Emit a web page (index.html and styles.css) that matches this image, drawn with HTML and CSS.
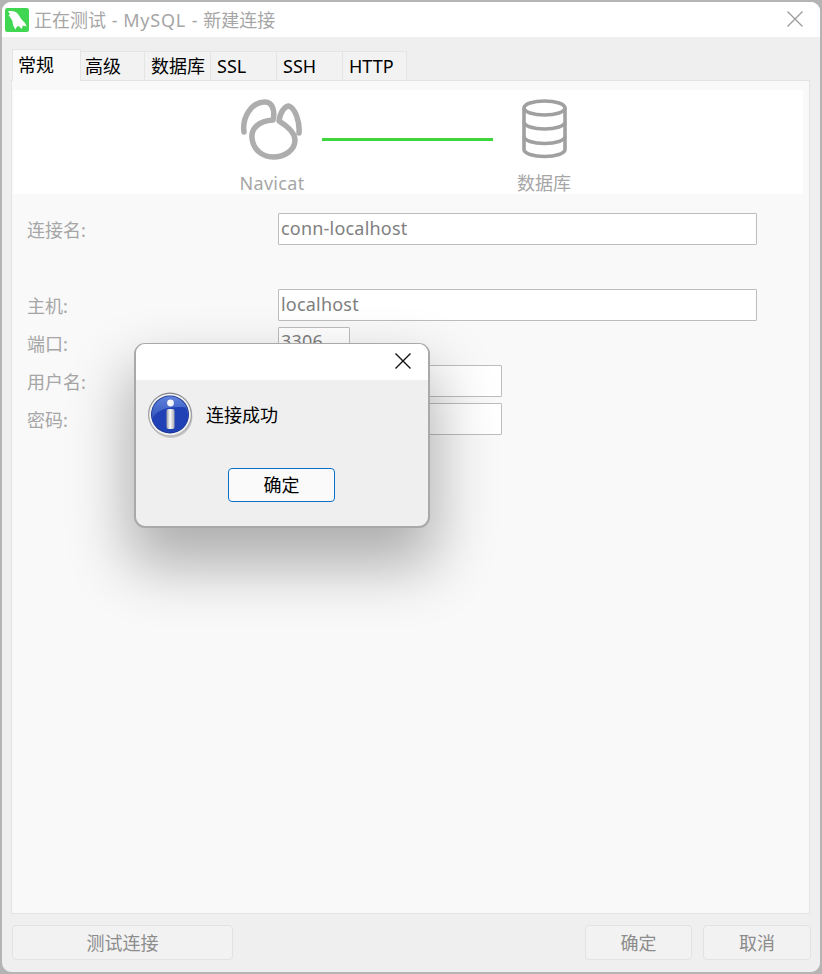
FILE: index.html
```html
<!DOCTYPE html>
<html lang="zh">
<head>
<meta charset="utf-8">
<title>正在测试 - MySQL - 新建连接</title>
<link rel="stylesheet" href="styles.css">
</head>
<body>
<div class="window">
  <header class="titlebar">
    <svg class="app-icon" viewBox="0 0 24 24" width="24" height="24">
      <rect width="24" height="24" rx="2.5" fill="#41d651"/>
      <path fill="#fff" d="M3 3.5 C6 2.5 10 3 12.5 5.5 C15 8 15.5 11 18 13 C19.5 14.2 21 16 21.5 18.5 C20 17.8 18.5 17.6 17.5 18 C17.6 19 17.2 20 16.5 21 C15.5 19.6 14.5 18.5 13 18 C11.5 19 11 20 10.5 21.5 C8.5 19 7.5 16 7.5 13 C6 10.5 5 8.5 3.5 7.5 L5 6 Z"/>
    </svg>
    <span class="title-text">正在测试 - <span class="title-app">MySQL</span> - 新建连接</span>
    <svg class="close-icon" viewBox="0 0 16 16" width="16" height="16">
      <path d="M0.5 0.5 L15.5 15.5 M15.5 0.5 L0.5 15.5" stroke="#9a9a9a" stroke-width="1.3" fill="none"/>
    </svg>
  </header>

  <nav class="tabs">
    <span class="tab tab-active">常规</span>
    <span class="tab">高级</span>
    <span class="tab">数据库</span>
    <span class="tab">SSL</span>
    <span class="tab">SSH</span>
    <span class="tab">HTTP</span>
  </nav>

  <main class="panel">
    <section class="banner">
      <div class="step">
        <svg class="step-icon" viewBox="1 0 80 80" width="80" height="80">
          <path d="M13 42 C11 28 20 12 34 12 C42 12 44 22 42 30 C28 31 20 38 21 48 C22 60 32 67 42 67 C54 67 64 60 64 50 C64 42 56 36 48 31 C49 22 54 16 58 16 C64 18 69 32 68 43" fill="none" stroke="#adadad" stroke-width="5.5" stroke-linecap="round" stroke-linejoin="round"/>
        </svg>
        <span class="step-label step-label-latin">Navicat</span>
      </div>
      <div class="link-line"></div>
      <div class="step step-db">
        <svg class="step-icon" viewBox="0 -9 80 80" width="80" height="80">
          <g fill="none" stroke="#a0a0a0" stroke-width="3.6">
            <ellipse cx="40.5" cy="9" rx="20.5" ry="7"/>
            <path d="M20 9 V50.5 A20.5 7 0 0 0 61 50.5 V9"/>
            <path d="M20 23 A20.5 7 0 0 0 61 23"/>
            <path d="M20 37.5 A20.5 7 0 0 0 61 37.5"/>
          </g>
        </svg>
        <span class="step-label">数据库</span>
      </div>
    </section>

    <form class="form">
      <div class="row row-spaced"><label class="field-label">连接名:</label><div class="input input-wide">conn-localhost</div></div>
      <div class="row"><label class="field-label">主机:</label><div class="input input-wide">localhost</div></div>
      <div class="row"><label class="field-label">端口:</label><div class="input input-port">3306</div></div>
      <div class="row"><label class="field-label">用户名:</label><div class="input input-mid"></div></div>
      <div class="row"><label class="field-label">密码:</label><div class="input input-mid"></div></div>
    </form>
  </main>

  <footer class="footer">
    <button class="btn btn-test" type="button">测试连接</button>
    <div class="footer-right">
      <button class="btn btn-ok" type="button">确定</button>
      <button class="btn btn-cancel" type="button">取消</button>
    </div>
  </footer>
</div>

<div class="dialog">
  <div class="dialog-title">
    <svg class="dialog-close" viewBox="0 0 16 16" width="16" height="16">
      <path d="M0.5 0.5 L15.5 15.5 M15.5 0.5 L0.5 15.5" stroke="#111" stroke-width="1.4" fill="none"/>
    </svg>
  </div>
  <div class="dialog-body">
    <svg class="info-icon" viewBox="0 0 46 46" width="46" height="46">
      <defs>
        <linearGradient id="ring" x1="0" y1="0" x2="0" y2="1">
          <stop offset="0" stop-color="#7f8188"/>
          <stop offset="1" stop-color="#b8b8b8"/>
        </linearGradient>
        <linearGradient id="disc" x1="0" y1="0" x2="0" y2="1">
          <stop offset="0" stop-color="#5f82de"/>
          <stop offset="0.5" stop-color="#3a5cc0"/>
          <stop offset="1" stop-color="#1d3fae"/>
        </linearGradient>
        <linearGradient id="stem" x1="0" y1="0" x2="1" y2="0">
          <stop offset="0" stop-color="#9a9ca4"/>
          <stop offset="0.45" stop-color="#fbfbfb"/>
          <stop offset="1" stop-color="#a6a8b0"/>
        </linearGradient>
      </defs>
      <circle cx="23" cy="24.5" r="21.5" fill="#000" opacity="0.18"/>
      <circle cx="22" cy="22.5" r="22" fill="url(#ring)"/>
      <circle cx="22" cy="22.5" r="20.8" fill="#f2f2f2"/>
      <circle cx="22" cy="22.5" r="19" fill="#16308c"/>
      <circle cx="22" cy="22.5" r="18.2" fill="url(#disc)"/>
      <path d="M4 27 C9 18 20 13.5 38 15.5 C41.5 23 40 32 34 36.5 C26 42.5 9 41.5 4 27 Z" fill="#2041b6"/>
      <circle cx="22.5" cy="11" r="3.4" fill="#f4f6fb"/>
      <rect x="18.5" y="17" width="8" height="20" rx="2" fill="url(#stem)"/>
    </svg>
    <span class="dialog-msg">连接成功</span>
  </div>
  <div class="dialog-actions">
    <button class="dialog-btn" type="button">确定</button>
  </div>
</div>
</body>
</html>
```
FILE: styles.css
```css
* {
  box-sizing: border-box;
}

html,
body {
  margin: 0;
  height: 974px;
  overflow: hidden;
}

body {
  position: relative;
  padding: 0 0 2px;
  font-family: "Noto Sans", "Noto Sans CJK SC", sans-serif;
  font-size: 18px;
  background: linear-gradient(180deg, #b4b4b4 0, #b4b4b4 178px, #c07060 180px, #c07060 190px, #5f8cb0 195px, #5f8cb0 205px, #9fa9b3 210px, #b4b4b4 240px);
}

.window {
  width: 822px;
  height: 974px;
  display: flex;
  flex-direction: column;
  background: #efefef;
  border: 2px solid #b4b4b4;
  border-radius: 11px;
  overflow: hidden;
}

.titlebar {
  height: 35px;
  flex: none;
  display: flex;
  align-items: center;
  padding: 0 17px 0 3px;
  background: #fff;
}

.app-icon {
  flex: none;
  margin-top: 1px;
}

.title-text {
  margin-left: 5px;
  color: #a6a6a6;
  line-height: 24px;
  word-spacing: 1px;
}

.title-app {
  letter-spacing: 0.8px;
}

.close-icon {
  margin-left: auto;
  margin-top: -2px;
}

.tabs {
  height: 32px;
  flex: none;
  margin-top: 12px;
  padding-left: 10px;
  display: flex;
  align-items: flex-end;
  position: relative;
  z-index: 1;
}

.tab {
  width: 66px;
  height: 29px;
  flex: none;
  padding-left: 6px;
  margin-bottom: 1px;
  line-height: 28px;
  color: #000;
  white-space: nowrap;
  background: #f2f2f2;
  border: 1px solid #e4e4e4;
  border-bottom: 0;
  border-left: 0;
}

.tab:nth-child(2) {
  width: 64px;
  padding-left: 4px;
}

.tab:last-child {
  width: 64px;
}

.tab-active {
  width: 69px;
  height: 32px;
  margin-bottom: 0;
  padding-left: 5px;
  line-height: 31px;
  background: #f9f9f9;
  border-left: 1px solid #e4e4e4;
}

.panel {
  flex: 1;
  margin: -1px 10px 0 9px;
  padding-top: 9px;
  background: #f9f9f9;
  border: 1px solid #e4e4e4;
}

.banner {
  height: 104px;
  margin: 0 6px 0 1px;
  display: flex;
  justify-content: center;
  align-items: flex-start;
  background: #fff;
  overflow: hidden;
}

.step {
  width: 80px;
  flex: none;
  display: flex;
  flex-direction: column;
  align-items: center;
  color: #a6a6a6;
}

.step-db {
  margin-left: 11px;
}

.step-icon {
  display: block;
  width: 80px;
  height: 80px;
  flex: none;
}

.step-label {
  line-height: 26px;
  white-space: nowrap;
}

.step-label-latin {
  letter-spacing: 0.3px;
}

.link-line {
  width: 171px;
  height: 3px;
  flex: none;
  margin: 48px 0 0 10px;
  background: #3dd63d;
}

.form {
  padding: 19px 0 0 15px;
}

.row {
  display: flex;
  align-items: center;
  height: 32px;
  margin-bottom: 6px;
}

.row-spaced {
  margin-bottom: 44px;
}

.field-label {
  width: 251px;
  flex: none;
  color: #a6a6a6;
}

.input {
  height: 32px;
  padding-left: 2px;
  color: #808080;
  line-height: 28px;
  letter-spacing: 0.2px;
  background: #fff;
  border: 1px solid #bdbdbd;
  border-radius: 1px;
  white-space: nowrap;
}

.input-wide {
  width: 479px;
}

.input-port {
  width: 72px;
  line-height: 27px;
}

.input-mid {
  width: 224px;
}

.footer {
  height: 58px;
  flex: none;
  display: flex;
  justify-content: space-between;
  padding: 11px 9px 0 10px;
}

.footer-right {
  display: flex;
  gap: 11px;
}

.btn {
  height: 35px;
  padding: 0;
  font: inherit;
  line-height: 30px;
  color: #8c8c8c;
  background: #f2f2f2;
  border: 1px solid #e2e2e2;
  border-radius: 4px;
}

.btn-test {
  width: 221px;
}

.btn-ok {
  width: 107px;
}

.btn-cancel {
  width: 108px;
}

.dialog {
  position: absolute;
  left: 134px;
  top: 343px;
  width: 296px;
  height: 185px;
  background: #efefef;
  border: 2px solid #a9a9a9;
  border-top-width: 1px;
  border-radius: 11px;
  box-shadow: 0 32px 60px 6px rgba(0, 0, 0, 0.3);
}

.dialog-title {
  height: 36px;
  display: flex;
  justify-content: flex-end;
  align-items: center;
  padding-right: 17px;
  background: #fff;
  border-radius: 9px 9px 0 0;
}

.dialog-close {
  margin-top: -2px;
}

.dialog-body {
  display: flex;
  align-items: center;
  height: 46px;
  margin-top: 12px;
  padding-left: 12px;
}

.info-icon {
  flex: none;
}

.dialog-msg {
  margin-left: 12px;
  color: #000;
  line-height: 26px;
}

.dialog-actions {
  display: flex;
  justify-content: center;
  margin-top: 30px;
  padding-right: 1px;
}

.dialog-btn {
  width: 107px;
  height: 34px;
  padding: 0;
  font: inherit;
  color: #000;
  line-height: 30px;
  background: #fafafa;
  border: 1px solid #0a6fc8;
  border-radius: 4px;
}
```
